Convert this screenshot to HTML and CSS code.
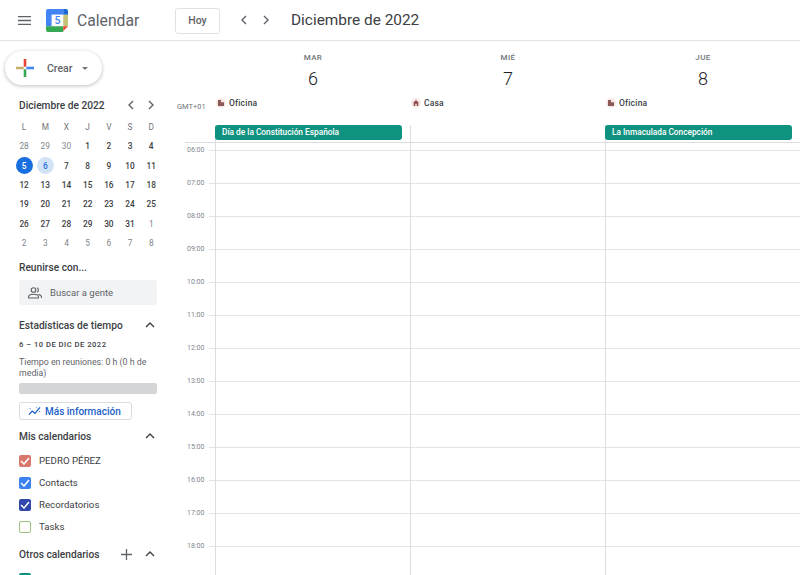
FILE: index.html
```html
<!DOCTYPE html>
<html lang="es">
<head>
<meta charset="utf-8">
<title>Calendar</title>
<link rel="stylesheet" href="styles.css">
</head>
<body>
<header class="topbar">
  <svg class="menu" width="13" height="9" viewBox="0 0 13 9"><path d="M0 .7h13M0 4.500h13M0 8.300h13" stroke="#5f6368" stroke-width="1.300"/></svg>
  <svg class="logo" width="23" height="23" viewBox="0 0 24 24">
    <path d="M2 0h16v6H6v12H0V2a2 2 0 0 1 2-2z" fill="#4285f4"/>
    <path d="M6 6h12v12H6z" fill="#fff"/>
    <path d="M18 0h3a2 2 0 0 1 2 2v4h-5z" fill="#1967d2"/>
    <path d="M18 6h5v12h-5z" fill="#c5c27a"/>
    <path d="M0 18h18v6H2a2 2 0 0 1-2-2z" fill="#34a853"/>
    <path d="M18 18h5l-5 5z" fill="#ea4335"/>
    <text x="12" y="15.500" class="logo-num">5</text>
  </svg>
  <span class="brand">Calendar</span>
  <button class="today">Hoy</button>
  <div class="nav">
    <svg width="8" height="10" viewBox="0 0 8 10"><path d="M6 1 2 5l4 4" class="chev"/></svg>
    <svg width="8" height="10" viewBox="0 0 8 10"><path d="M2 1l4 4-4 4" class="chev"/></svg>
  </div>
  <h1 class="period">Diciembre de 2022</h1>
</header>
<div class="main">
  <aside class="side">
    <button class="create">
      <svg width="18" height="18" viewBox="0 0 18 18">
        <path d="M7.700 0h2.600v7.700H7.700z" fill="#ea4335"/><path d="M10.300 7.700H18v2.600h-7.700z" fill="#4285f4"/>
        <path d="M7.700 10.300h2.600V18H7.700z" fill="#34a853"/><path d="M0 7.700h7.700v2.600H0z" fill="#c6b06c"/>
      </svg>
      <span class="create-label">Crear</span>
      <span class="caret"></span>
    </button>
    <div class="mini-head">
      <span class="mini-title">Diciembre de 2022</span>
      <svg width="8" height="10" viewBox="0 0 8 10"><path d="M6 1 2 5l4 4" class="chev small"/></svg>
      <svg width="8" height="10" viewBox="0 0 8 10"><path d="M2 1l4 4-4 4" class="chev small"/></svg>
    </div>
    <div class="mini-grid">
      <span class="dow">L</span><span class="dow">M</span><span class="dow">X</span><span class="dow">J</span><span class="dow">V</span><span class="dow">S</span><span class="dow">D</span>
      <span class="off">28</span><span class="off">29</span><span class="off">30</span><span>1</span><span>2</span><span>3</span><span>4</span>
      <span class="now"><b>5</b></span><span class="sel"><b>6</b></span><span>7</span><span>8</span><span>9</span><span>10</span><span>11</span>
      <span>12</span><span>13</span><span>14</span><span>15</span><span>16</span><span>17</span><span>18</span>
      <span>19</span><span>20</span><span>21</span><span>22</span><span>23</span><span>24</span><span>25</span>
      <span>26</span><span>27</span><span>28</span><span>29</span><span>30</span><span>31</span><span class="off">1</span>
      <span class="off">2</span><span class="off">3</span><span class="off">4</span><span class="off">5</span><span class="off">6</span><span class="off">7</span><span class="off">8</span>
    </div>
    <h2 class="sec meet">Reunirse con...</h2>
    <div class="search">
      <svg width="14" height="12" viewBox="0 0 14 12" fill="none" stroke="#5f6368" stroke-width="1.100"><circle cx="5.500" cy="3" r="2.300"/><path d="M.6 11V9.600C.6 8 3.500 7.200 5.500 7.200s4.900.8 4.900 2.400V11z"/><path d="M8.800.8a2.300 2.300 0 0 1 0 4.400M10.500 7.400c1.600.4 3 1.100 3 2.300V11"/></svg>
      <span>Buscar a gente</span>
    </div>
    <div class="sec-row stats-row">
      <h2 class="sec">Estadísticas de tiempo</h2>
      <svg class="up" width="10" height="6" viewBox="0 0 10 6"><path d="M1 5l4-4 4 4" class="chev dark"/></svg>
    </div>
    <div class="range">6 – 10 DE DIC DE 2022</div>
    <p class="meet-time">Tiempo en reuniones: 0 h (0 h de media)</p>
    <div class="bar"></div>
    <button class="more">
      <svg width="13" height="10" viewBox="0 0 14 10" fill="none" stroke="#1a5fc8" stroke-width="1.300"><path d="M1 9l3.500-4 3 2.500L13 1"/><path d="M9 .8l1 1M2 2l1 1M12 5l1 1" stroke-width="1"/></svg>
      <span>Más información</span>
    </button>
    <div class="sec-row cals-row">
      <h2 class="sec">Mis calendarios</h2>
      <svg class="up" width="10" height="6" viewBox="0 0 10 6"><path d="M1 5l4-4 4 4" class="chev dark"/></svg>
    </div>
    <ul class="cal-list">
      <li><span class="check c-red"><svg width="10" height="8" viewBox="0 0 10 8"><path d="M1 4l3 3 5-6" class="tick"/></svg></span>PEDRO PÉREZ</li>
      <li><span class="check c-blue"><svg width="10" height="8" viewBox="0 0 10 8"><path d="M1 4l3 3 5-6" class="tick"/></svg></span>Contacts</li>
      <li><span class="check c-navy"><svg width="10" height="8" viewBox="0 0 10 8"><path d="M1 4l3 3 5-6" class="tick"/></svg></span>Recordatorios</li>
      <li><span class="check c-green"></span>Tasks</li>
    </ul>
    <div class="sec-row others-row">
      <h2 class="sec">Otros calendarios</h2>
      <svg class="plus" width="11" height="11" viewBox="0 0 11 11"><path d="M5.500 0v11M0 5.500h11" stroke="#5f6368" stroke-width="1.300"/></svg>
      <svg class="up" width="10" height="6" viewBox="0 0 10 6"><path d="M1 5l4-4 4 4" class="chev dark"/></svg>
    </div>
    <span class="check c-teal"></span>
  </aside>
  <section class="week">
    <div class="week-head">
      <div class="gmt">GMT+01</div>
      <div class="day">
        <div class="dname">MAR</div><div class="dnum">6</div>
        <div class="where"><span class="where-ico"><svg width="8" height="8" viewBox="0 0 8 8"><path d="M0 0h4v8H0zM4 3h4v5H4z" fill="#8d5a5a"/></svg></span>Oficina</div>
        <div class="allday"><div class="event">Día de la Constitución Española</div></div>
      </div>
      <div class="day">
        <div class="dname">MIÉ</div><div class="dnum">7</div>
        <div class="where"><span class="where-ico"><svg width="8" height="8" viewBox="0 0 8 8"><path d="M4 0 0 4h1v4h2V5h2v3h2V4h1z" fill="#8d4a4a"/></svg></span>Casa</div>
        <div class="allday"></div>
      </div>
      <div class="day">
        <div class="dname">JUE</div><div class="dnum">8</div>
        <div class="where"><span class="where-ico"><svg width="8" height="8" viewBox="0 0 8 8"><path d="M0 0h4v8H0zM4 3h4v5H4z" fill="#8d5a5a"/></svg></span>Oficina</div>
        <div class="allday"><div class="event">La Inmaculada Concepción</div></div>
      </div>
    </div>
    <div class="week-body">
      <div class="hours">
        <div class="hour"><span>06:00</span></div><div class="hour"><span>07:00</span></div><div class="hour"><span>08:00</span></div><div class="hour"><span>09:00</span></div><div class="hour"><span>10:00</span></div><div class="hour"><span>11:00</span></div><div class="hour"><span>12:00</span></div><div class="hour"><span>13:00</span></div><div class="hour"><span>14:00</span></div><div class="hour"><span>15:00</span></div><div class="hour"><span>16:00</span></div><div class="hour"><span>17:00</span></div><div class="hour"><span>18:00</span></div>
      </div>
      <div class="col"></div><div class="col"></div><div class="col"></div>
    </div>
  </section>
</div>
</body>
</html>
```
FILE: styles.css
```css
* { box-sizing: border-box; }
html, body { margin: 0; height: 575px; overflow: hidden; background: #fff; }
body { font-family: Roboto, "Liberation Sans", sans-serif; color: #3c4043; }
h1, h2, p, ul { margin: 0; padding: 0; font-weight: 400; }
button { font-family: inherit; padding: 0; }
svg { display: block; flex: none; }

.topbar { height: 41px; display: flex; align-items: center; border-bottom: 1px solid #e3e4e6; padding-left: 18px; }
.logo { margin-left: 15px; margin-top: 1px; }
.logo-num { font: 500 11px Roboto, sans-serif; fill: #4285f4; text-anchor: middle; }
.brand { font-size: 15.700px; color: #5f6368; margin-left: 8px; white-space: nowrap; flex: none; width: 98px; }
.today { width: 45px; height: 26px; background: #fff; border: 1px solid #e0e1e3; border-radius: 3px; font-size: 10.500px; font-weight: 500; color: #5f6368; margin-top: 1px; }
.nav { display: flex; gap: 14px; margin-left: 20px; }
.chev { fill: none; stroke: #5f6368; stroke-width: 1.400; }
.chev.dark { stroke: #3c4043; }
.period { font-size: 15.400px; color: #3c4043; margin-left: 21px; }

.main { display: flex; height: 534px; }
.side { width: 172px; flex: none; padding: 10px 0 0 19px; overflow: hidden; position: relative; }
.create { margin-left: -14px; width: 97px; height: 34px; border-radius: 17px; background: #fff; border: 0; box-shadow: 0 1px 3px 1px rgba(60,64,67,.22); display: flex; align-items: center; padding-left: 11px; color: #3c4043; }
.create-label { font-size: 10.500px; font-weight: 500; margin-left: 13px; color: #5f6368; }
.caret { border: 3px solid transparent; border-top: 3px solid #70757a; border-bottom: 0; margin-left: 10px; }

.mini-head { display: flex; align-items: center; margin-top: 12px; height: 16px; }
.mini-title { font-size: 10.200px; font-weight: 500; color: #3c4043; width: 108px; white-space: nowrap; }
.mini-head svg + svg { margin-left: 12px; }
.mini-grid { display: grid; grid-template-columns: repeat(7, 21.200px); grid-auto-rows: 19.300px; margin: 4.500px 0 0 -5.500px; font-size: 8.300px; font-weight: 500; color: #3c4043; }
.mini-grid > span { display: flex; align-items: center; justify-content: center; }
.dow { color: #70757a; font-weight: 400; }
.off { color: #80868b; font-weight: 400; }
.mini-grid b { width: 17px; height: 17px; border-radius: 50%; display: flex; align-items: center; justify-content: center; font-weight: 500; }
.now b { background: #1a6fe0; color: #fff; }
.sel b { background: #d2e3f5; color: #1a6fe0; }

.sec { font-size: 10.200px; font-weight: 500; color: #3c4043; white-space: nowrap; }
.meet { margin-top: 8.500px; line-height: 14px; }
.search { width: 138px; height: 25px; margin-top: 5px; background: #f1f3f4; border-radius: 3px; display: flex; align-items: center; padding-left: 9px; font-size: 9.500px; color: #5f6368; gap: 8px; }
.sec-row { display: flex; align-items: center; width: 138px; height: 14px; }
.sec-row .up { margin-left: auto; margin-right: 2px; }
.stats-row { margin-top: 13px; }
.range { font-size: 7.600px; font-weight: 500; letter-spacing: .5px; color: #3c4043; margin-top: 7px; line-height: 12px; }
.meet-time { width: 138px; font-size: 8.800px; line-height: 11px; color: #5f6368; margin-top: 6px; }
.bar { width: 138px; height: 11px; background: #d3d5d7; border-radius: 2px; margin-top: 4px; }
.more { width: 113px; height: 18px; margin-top: 8px; background: #fff; border: 1px solid #dadce0; border-radius: 3px; display: flex; align-items: center; padding-left: 8px; gap: 4px; font-size: 10px; font-weight: 500; color: #1a5fc8; }
.cals-row { margin-top: 9px; }
.cal-list { list-style: none; margin-top: 6.500px; }
.cal-list li { height: 22px; display: flex; align-items: center; font-size: 9.700px; color: #3c4043; gap: 8px; white-space: nowrap; }
.check { width: 12px; height: 12px; border-radius: 2px; display: flex; align-items: center; justify-content: center; flex: none; }
.tick { fill: none; stroke: #fff; stroke-width: 1.500; }
.c-red { background: #d9776c; }
.c-blue { background: #3b82f0; }
.c-navy { background: #3046ad; }
.c-green { border: 1.500px solid #9cc07c; background: #fff; }
.c-teal { background: #0f9380; display: block; margin-top: 12px; }
.others-row { margin-top: 9.500px; }
.others-row .plus { margin-left: auto; }
.others-row .up { margin-left: 13px; }

.week { flex: 1; min-width: 0; }
.week-head { height: 102px; display: grid; grid-template-columns: 43px repeat(3, 195px); background: linear-gradient(#dadce0, #dadce0) 13px 100% / 100% 1px no-repeat; }
.gmt { font-size: 7.500px; color: #70757a; padding-left: 5px; padding-top: 61px; }
.day { display: flex; flex-direction: column; }
.dname { text-align: center; font-size: 8px; font-weight: 500; color: #70757a; letter-spacing: .4px; margin-top: 12px; padding-left: 1px; line-height: 10px; }
.dnum { text-align: center; font-size: 18px; font-weight: 300; color: #202124; line-height: 24px; margin-top: 4px; padding-left: 1px; }
.where { display: flex; align-items: center; gap: 3px; font-size: 8.500px; font-weight: 500; color: #3c4043; margin-top: 6px; padding-left: 1px; height: 12px; letter-spacing: .2px; }
.where-ico { width: 10px; height: 10px; border-radius: 50%; background: #f6e9e8; display: flex; align-items: center; justify-content: center; }
.where-ico svg { width: 6px; height: 6px; }
.allday { flex: 1; margin-top: 16px; padding: 0 7px 0 0; border-left: 1px solid #dddee0; margin-bottom: 1px; }
.event { height: 15px; margin: 0 1px 0 -1px; background: #0f9380; border-radius: 3px; color: #fff; font-size: 8.300px; font-weight: 500; line-height: 15px; padding-left: 7px; }
.week-body { display: grid; grid-template-columns: 43px repeat(3, 195px); height: 432px; }
.hour { height: 33px; padding: 1px 0 0 15px; }
.hour span { display: block; font-size: 7px; color: #80868b; line-height: 12px; }
.col { border-left: 1px solid #dddee0; background: repeating-linear-gradient(to bottom, transparent 0, transparent 7px, #e3e4e6 7px, #e3e4e6 8px, transparent 8px, transparent 33px); }
.hours { background: repeating-linear-gradient(to bottom, transparent 0, transparent 7px, #e3e4e6 7px, #e3e4e6 8px, transparent 8px, transparent 33px) 37px 0 / 6px 100% no-repeat; }
```
